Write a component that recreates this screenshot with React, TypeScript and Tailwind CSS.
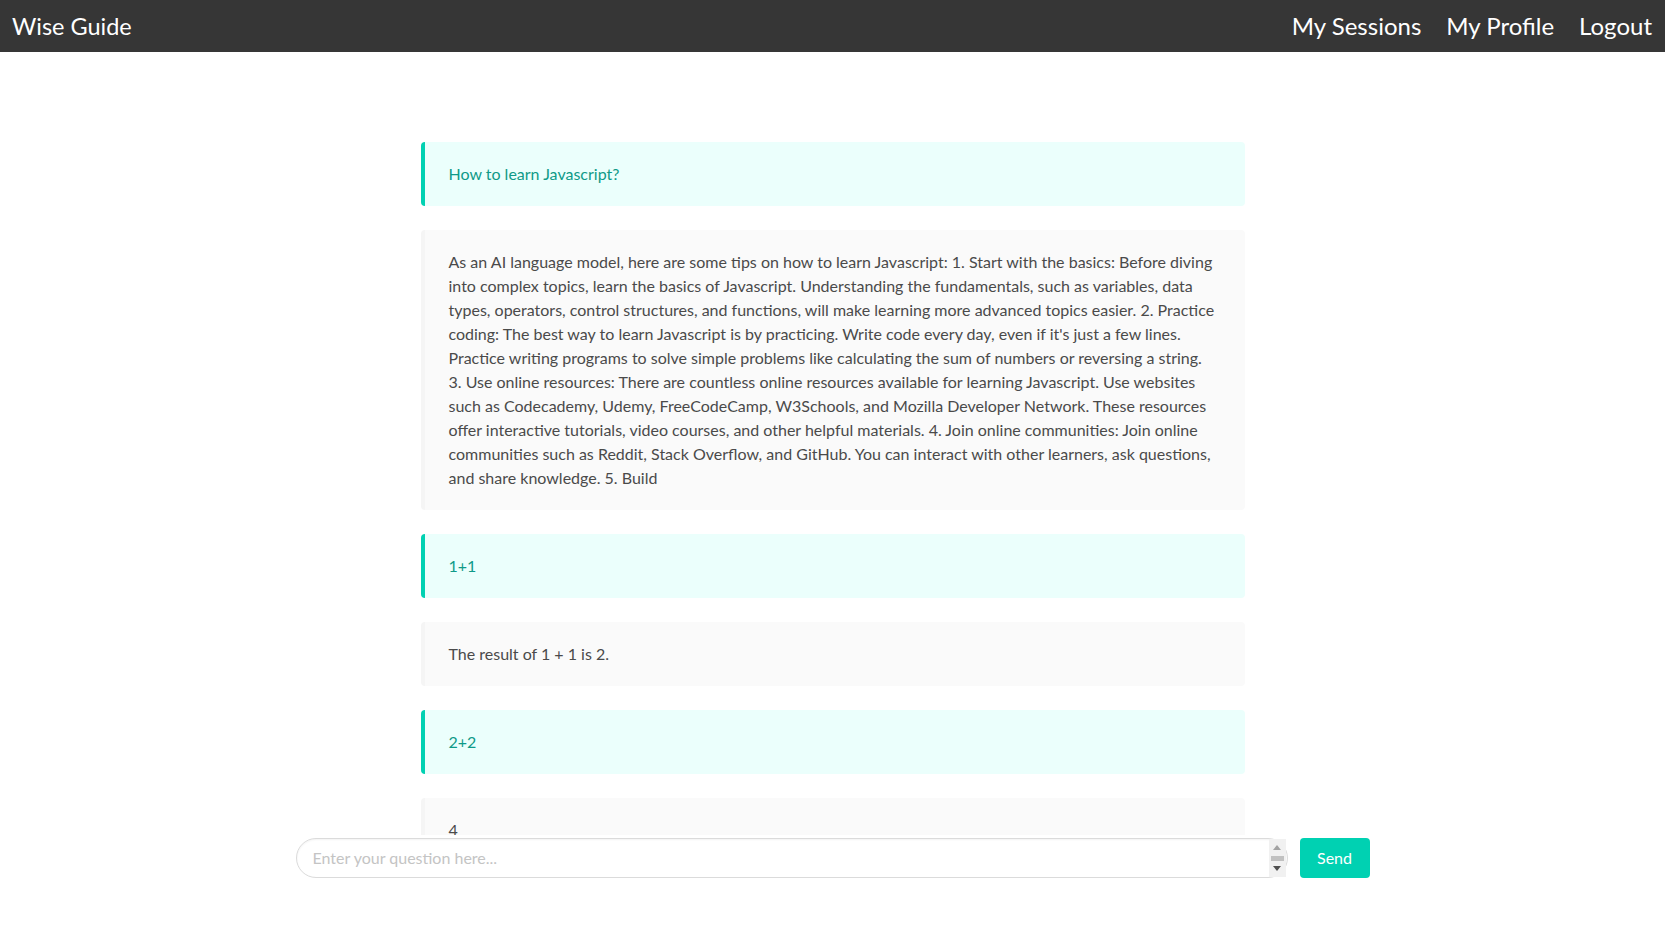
import React from 'react';

const answerLines = [
  'As an AI language model, here are some tips on how to learn Javascript: 1. Start with the basics: Before diving',
  'into complex topics, learn the basics of Javascript. Understanding the fundamentals, such as variables, data',
  'types, operators, control structures, and functions, will make learning more advanced topics easier. 2. Practice',
  "coding: The best way to learn Javascript is by practicing. Write code every day, even if it's just a few lines.",
  'Practice writing programs to solve simple problems like calculating the sum of numbers or reversing a string.',
  '3. Use online resources: There are countless online resources available for learning Javascript. Use websites',
  'such as Codecademy, Udemy, FreeCodeCamp, W3Schools, and Mozilla Developer Network. These resources',
  'offer interactive tutorials, video courses, and other helpful materials. 4. Join online communities: Join online',
  'communities such as Reddit, Stack Overflow, and GitHub. You can interact with other learners, ask questions,',
  'and share knowledge. 5. Build',
];

function Question({ text }: { text: string }) {
  return (
    <div className="bg-[#ebfffc] rounded border-l-4 border-[#00d1b2] px-6 py-5 text-[#0f9a88]">
      {text}
    </div>
  );
}

function Answer({ children }: { children: React.ReactNode }) {
  return (
    <div className="bg-[#fafafa] rounded border-l-4 border-[#f5f5f5] px-6 py-5 text-[#4a4a4a]">
      {children}
    </div>
  );
}

export default function App() {
  return (
    <div
      className="h-screen flex flex-col bg-white text-base leading-6 overflow-hidden"
      style={{ fontFamily: 'Lato, "Open Sans", sans-serif' }}
    >
      {/* Navbar */}
      <header className="h-[52px] shrink-0 bg-[#363636] flex items-center justify-between pl-3 pr-[13px] text-white">
        <span className="text-[23.5px]">Wise Guide</span>
        <nav className="flex items-center gap-[25px] text-[24px]">
          <a>My Sessions</a>
          <a>My Profile</a>
          <a>Logout</a>
        </nav>
      </header>

      {/* Chat history */}
      <main className="flex-1 overflow-hidden pt-[90px]">
        <div className="w-[824px] mx-auto flex flex-col gap-6">
          <Question text="How to learn Javascript?" />
          <Answer>
            {answerLines.map((line) => (
              <span key={line} className="block whitespace-nowrap">
                {line}
              </span>
            ))}
          </Answer>
          <Question text="1+1" />
          <Answer>The result of 1 + 1 is 2.</Answer>
          <Question text="2+2" />
          <Answer>4</Answer>
        </div>
      </main>

      {/* Input bar */}
      <footer className="h-[102px] shrink-0 bg-white pt-[3px]">
        <div className="w-[1074px] mx-auto flex items-start gap-3">
          <div className="relative flex-1">
            <textarea
              rows={1}
              placeholder="Enter your question here..."
              className="block w-full h-10 resize-none overflow-hidden rounded-[20px] border border-[#dbdbdb] pl-4 pr-6 py-[7px] text-[#363636] placeholder:text-[#c4c4c4] shadow-[inset_0_1px_2px_rgba(10,10,10,0.05)] outline-none"
            />
            {/* textarea scrollbar */}
            <div className="absolute right-[2px] top-px bottom-px w-[17px] bg-[#f1f1f1] flex flex-col items-center justify-between py-[6px]">
              <svg width="8" height="5" viewBox="0 0 8 5">
                <path d="M0 5L4 0L8 5Z" fill="#a3a3a3" />
              </svg>
              <div className="w-[13px] h-[5px] bg-[#c1c1c1]" />
              <svg width="8" height="5" viewBox="0 0 8 5">
                <path d="M0 0L8 0L4 5Z" fill="#505050" />
              </svg>
            </div>
          </div>
          <button className="h-10 w-[70px] shrink-0 rounded bg-[#00d1b2] text-white">
            Send
          </button>
        </div>
      </footer>
    </div>
  );
}
